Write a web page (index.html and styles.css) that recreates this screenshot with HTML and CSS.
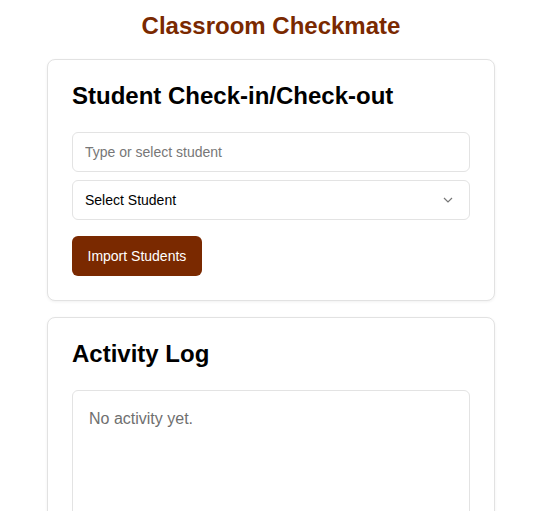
FILE: index.html
```html
<!DOCTYPE html>
<html lang="en">
<head>
<meta charset="utf-8">
<title>Classroom Checkmate</title>
<link rel="stylesheet" href="styles.css">
</head>
<body>
<main class="page">
  <h1 class="title">Classroom Checkmate</h1>
  <section class="card">
    <h2 class="card-title">Student Check-in/Check-out</h2>
    <input class="field" type="text" placeholder="Type or select student">
    <div class="select-wrap">
      <span class="select-label">Select Student</span>
      <svg class="chevron" width="10" height="6" viewBox="0 0 10 6"><path d="M1 1l4 4 4-4" fill="none" stroke="#777" stroke-width="1.2"/></svg>
    </div>
    <div class="actions">
      <button class="btn">Import Students</button>
    </div>
  </section>
  <section class="card log-card">
    <h2 class="card-title">Activity Log</h2>
    <div class="log">
      <p class="empty">No activity yet.</p>
    </div>
  </section>
</main>
</body>
</html>
```

FILE: styles.css
```css
html, body {
  margin: 0;
  padding: 0;
  background: #ffffff;
  font-family: "Liberation Sans", Arial, sans-serif;
  color: #000;
}
.page {
  width: 448px;
  margin: 0 0 0 47px;
  display: flex;
  flex-direction: column;
}
.title {
  margin: 11px 0 18px;
  font-size: 24px;
  line-height: 30px;
  font-weight: 700;
  color: #7a2900;
  text-align: center;
}
.card {
  border: 1px solid #e2e2e2;
  border-radius: 8px;
  background: #fff;
  padding: 22px 24px 24px;
  box-shadow: 0 1px 3px rgba(0,0,0,0.06);
  display: flex;
  flex-direction: column;
}
.card + .card {
  margin-top: 16px;
}
.card-title {
  margin: 0 0 22px;
  font-size: 24px;
  line-height: 28px;
  font-weight: 700;
}
.field {
  box-sizing: border-box;
  height: 40px;
  width: 100%;
  border: 1px solid #e3e3e3;
  border-radius: 6px;
  padding: 0 12px;
  font-family: inherit;
  font-size: 14px;
  color: #000;
  outline: none;
}
.field::placeholder {
  color: #777;
}
.select-wrap {
  box-sizing: border-box;
  margin-top: 8px;
  height: 40px;
  border: 1px solid #e3e3e3;
  border-radius: 6px;
  padding: 0 16px 0 12px;
  display: flex;
  align-items: center;
  justify-content: space-between;
  font-size: 14px;
}
.actions {
  margin-top: 16px;
  display: flex;
}
.btn {
  height: 40px;
  padding: 0 15.5px;
  border: none;
  border-radius: 6px;
  background: #7a2900;
  color: #fff;
  font-family: inherit;
  font-size: 14px;
}
.log {
  border: 1px solid #e3e3e3;
  border-radius: 6px;
  padding: 17px 16px 16px;
  height: 200px;
}
.empty {
  margin: 0;
  font-size: 16px;
  line-height: 22px;
  color: #6f6f6f;
}
```
